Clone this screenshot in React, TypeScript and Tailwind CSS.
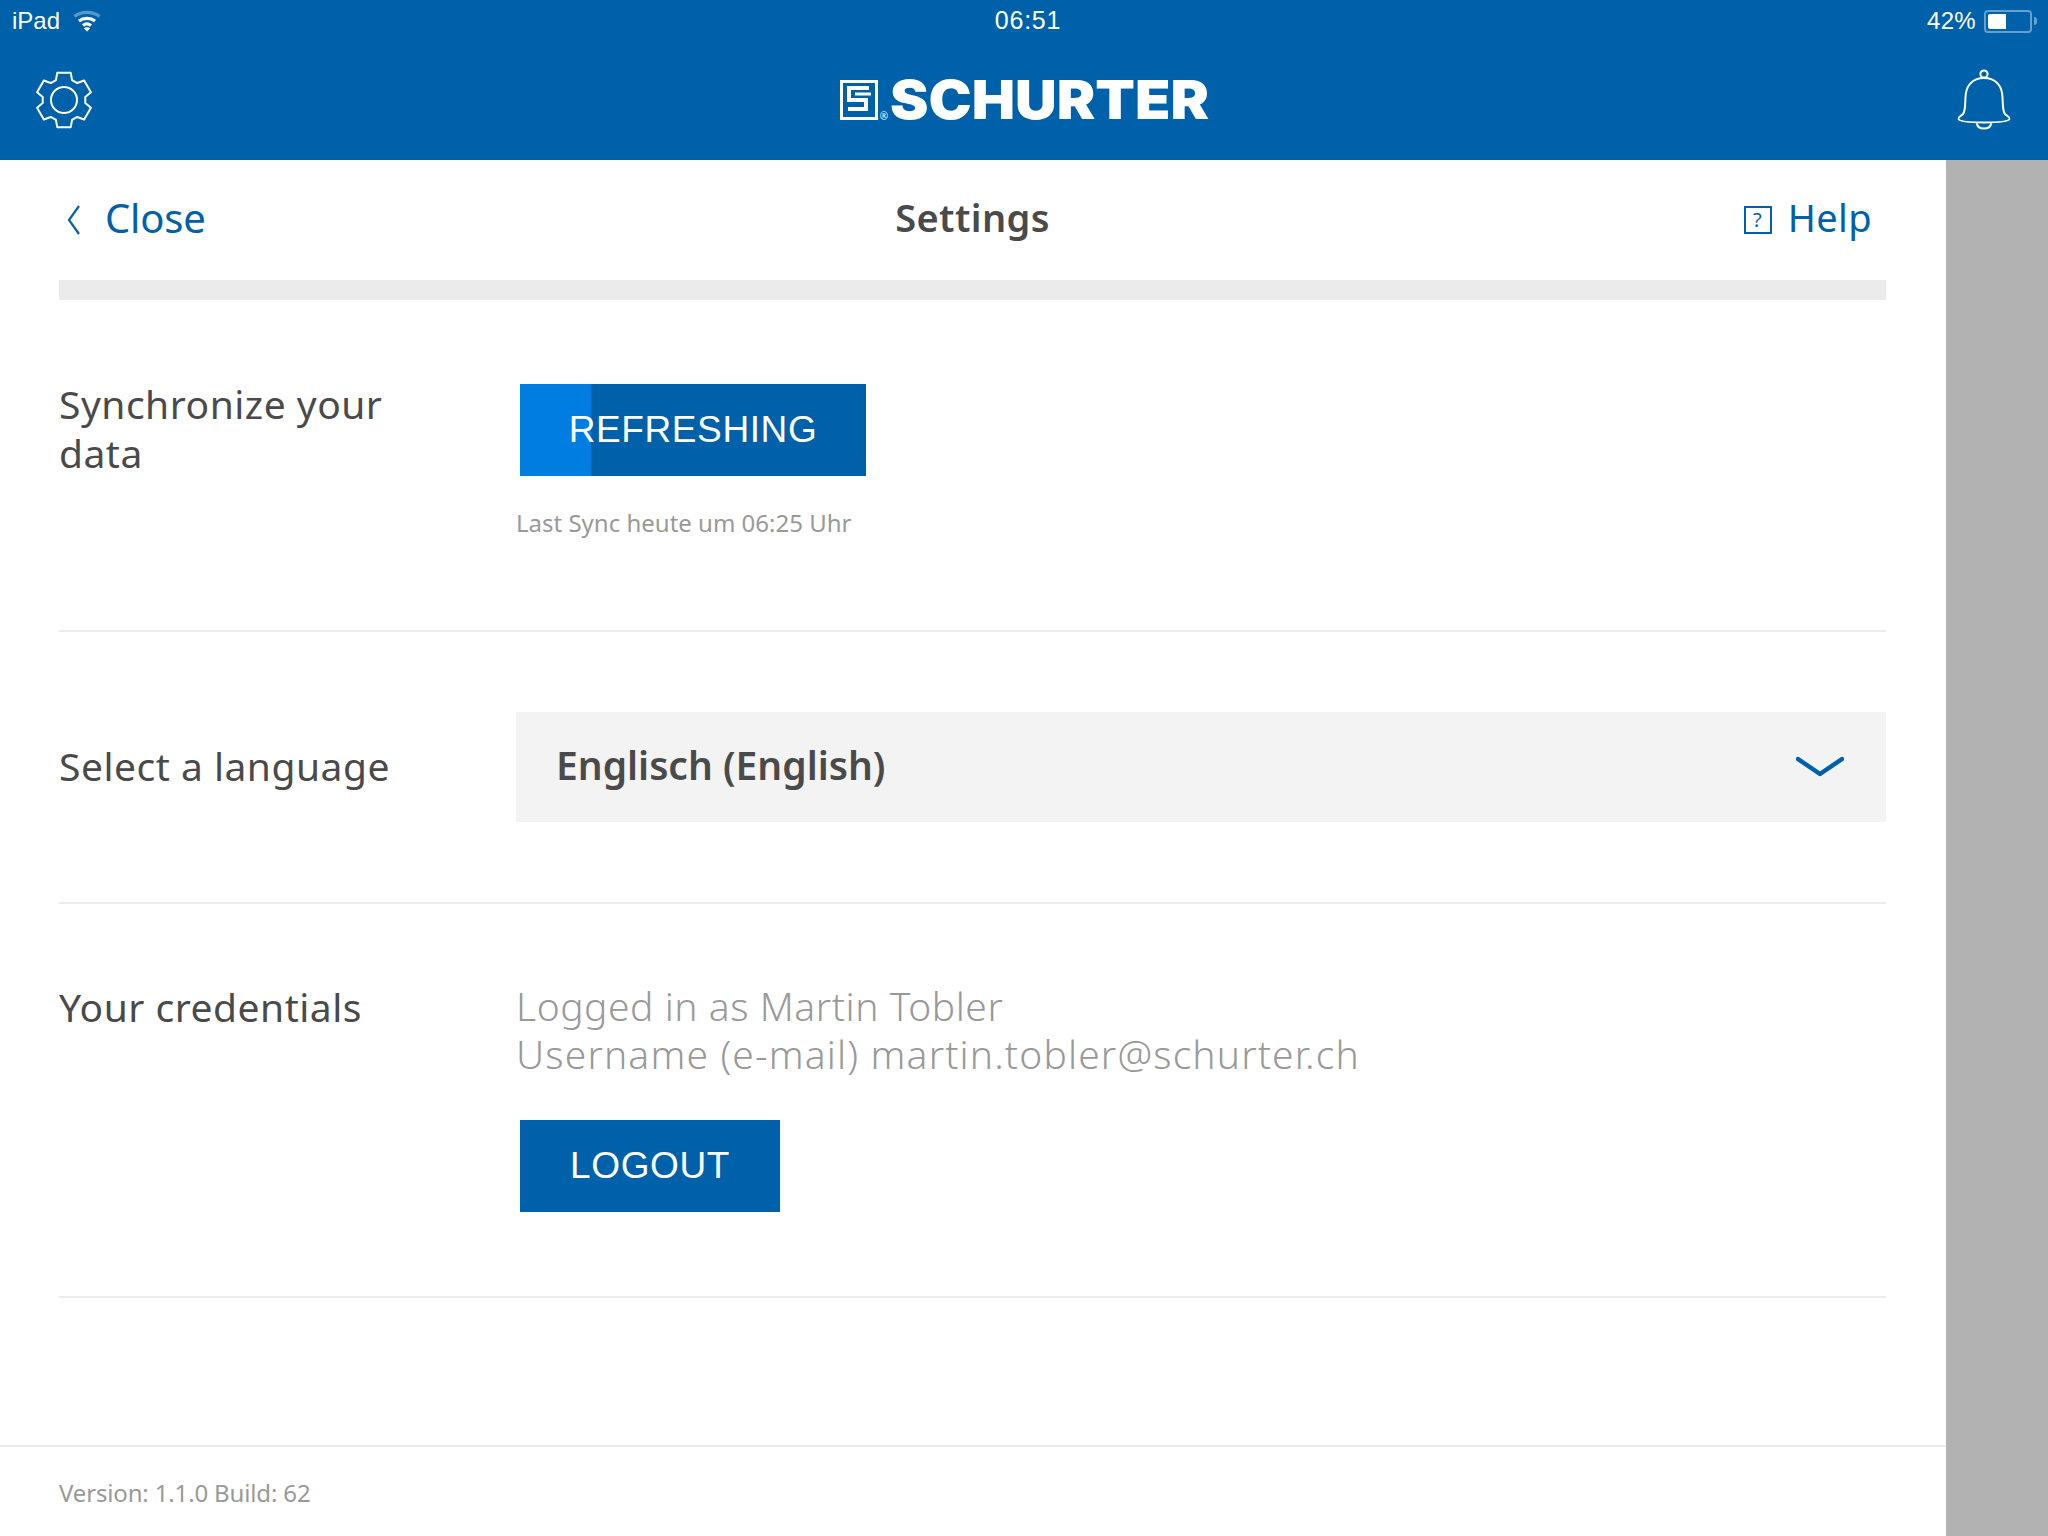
import React from "react"

const BLUE = "#0061ab"

// six-tooth gear outline, points worked out once when the module loads
const gearPath = (() => {
    const cx = 30, cy = 30
    const pts: string[] = []
    for (let i = 0; i < 6; i++) {
        const a = (i * 60 - 90) * Math.PI / 180
        const at = (r: number, d: number) => {
            const t = a + d * Math.PI / 180
            return `${(cx + r * Math.cos(t)).toFixed(2)} ${(cy + r * Math.sin(t)).toFixed(2)}`
        }
        pts.push(`${i === 0 ? "M" : "L"}${at(21.5, -22)}`)
        pts.push(`L${at(28, -14)}`)
        pts.push(`L${at(28, 14)}`)
        pts.push(`L${at(21.5, 22)}`)
    }
    return pts.join(" ") + " Z"
})()

const Gear = () => (
    <svg width="60" height="60" viewBox="0 0 60 60" fill="none" stroke="white" strokeWidth="2" strokeLinejoin="round">
        <path d={gearPath} />
        <circle cx="30" cy="30" r="13" />
    </svg>
)

const Bell = () => (
    <svg width="56" height="62" viewBox="0 0 56 62" fill="none" stroke="white" strokeWidth="2" strokeLinecap="round" strokeLinejoin="round">
        <circle cx="28" cy="5" r="3.6" />
        <path d="M28 9 C16 9 10 17 9.500 28 C9 37 9.500 42 7 45 C4.500 47.500 2 48 2.500 50 C3.500 52.500 15 53.500 28 53.500 C41 53.500 52.500 52.500 53.500 50 C54 48 51.500 47.500 49 45 C46.500 42 47 37 46.500 28 C46 17 40 9 28 9 Z" />
        <path d="M21 55 C22 61 34 61 35 55" />
    </svg>
)

const Wifi = () => (
    <svg width="28" height="22" viewBox="0 0 28 22" fill="none" strokeWidth="3.200">
        <path d="M1.500 6.500 C8 1 20 1 26.500 6.500" stroke="white" strokeOpacity="0.35" />
        <path d="M6 11 C10.500 7.500 17.500 7.500 22 11" stroke="white" />
        <path d="M10 15.500 C12.500 13.500 15.500 13.500 18 15.500" stroke="white" />
        <path d="M14 21.500 L10.800 18.200 C12.500 16.800 15.500 16.800 17.200 18.200 Z" fill="white" />
    </svg>
)

const Battery = () => (
    <div className="flex items-center">
        <div className="w-[48px] h-[23px] rounded-[4px] border-2 border-white/40 p-[2px] flex">
            <div className="w-[18px] bg-white rounded-l-[2px]" />
        </div>
        <div className="w-[3px] h-[8px] ml-[2px] bg-white/40 rounded-r-full" />
    </div>
)

const LogoMark = () => (
    <svg width="38" height="40" viewBox="0 0 38 40" fill="none" stroke="white">
        <rect x="1.500" y="1.500" width="35" height="37" strokeWidth="3" />
        <path d="M29 8 H9 V20 H26 V29 H8" strokeWidth="4" />
        <path d="M31 14 H15" strokeWidth="3" />
    </svg>
)

const PrimaryButton = ({ label, width, progress }: { label: string, width: string, progress?: boolean }) => (
    <div className={`relative h-[92px] ${width} ml-1 bg-[#0061ab] flex items-center justify-center`}>
        {progress && <div className="absolute left-0 top-0 bottom-0 w-[71px] bg-[#007de0]" />}
        <span className="relative text-white text-[37px] font-['Liberation_Sans',sans-serif] tracking-[0.6px]">{label}</span>
    </div>
)

const Row = ({ label, className, children }: { label: React.ReactNode, className: string, children: React.ReactNode }) => (
    <div className={`flex border-b-2 border-[#ebebeb] ${className}`}>
        <div className="w-[457px] shrink-0 text-[39px] leading-[49px] text-[#4a4a4a] tracking-[0.5px]">{label}</div>
        <div className="flex-1">{children}</div>
    </div>
)

export default function App() {
    return (
        <div className="w-[2048px] h-[1536px] flex flex-col overflow-hidden bg-white font-['Noto_Sans',sans-serif]">
            {/* blue header */}
            <header className="relative h-[160px] shrink-0 bg-[#0061ab] text-white">
                <div className="h-[42px] pl-3 pr-[11px] flex items-center justify-between font-['Liberation_Sans',sans-serif] text-[24px]">
                    <div className="flex items-center gap-[13px] w-[300px]">
                        <span>iPad</span>
                        <Wifi />
                    </div>
                    <span className="ml-[7px] text-[25px] tracking-[0.8px]">06:51</span>
                    <div className="flex items-center justify-end gap-[8px] w-[300px]">
                        <span className="tracking-[0.3px]">42%</span>
                        <Battery />
                    </div>
                </div>
                <div className="h-[118px] pl-[34px] pr-[36px] flex items-start justify-between">
                    <div className="mt-[28px]"><Gear /></div>
                    <div className="mt-[38px] -ml-[4px] flex items-start">
                        <LogoMark />
                        <span className="text-[10px] leading-none mt-[31px] ml-[2px] mr-[2px]">®</span>
                        <span className="block w-[316px] origin-left scale-x-[1.07] text-[54px] leading-[40px] font-black font-['Inter',sans-serif]">SCHURTER</span>
                    </div>
                    <div className="mt-[27px]"><Bell /></div>
                </div>
            </header>

            <div className="flex-1 flex">
                <main className="w-[1946px] flex flex-col">
                    <div className="flex-1 pl-[59px] pr-[60px]">
                        {/* top bar */}
                        <div className="h-[140px] pb-[5px] flex items-center justify-between border-b-[20px] border-[#ebebeb]">
                            <div className="flex items-center w-[400px] text-[40px] text-[#0061ab] tracking-[-0.2px]">
                                <svg className="ml-[8px] mr-[24px] mt-[5px]" width="14" height="30" viewBox="0 0 14 30" fill="none" stroke={BLUE} strokeWidth="2.200">
                                    <path d="M12 1 L2 15 L12 29" />
                                </svg>
                                Close
                            </div>
                            <div className="text-[38px] font-semibold text-[#4a4a4a] tracking-[0.4px]">Settings</div>
                            <div className="flex items-center justify-end w-[400px] pr-[14px] text-[38px] text-[#0061ab] tracking-[0.4px]">
                                <span className="w-[28px] h-[28px] mr-[16px] mt-[5px] border-2 border-[#0061ab] flex items-center justify-center text-[20px] leading-none">?</span>
                                Help
                            </div>
                        </div>

                        <Row label={<div className="-mt-[5px]">Synchronize your<br />data</div>} className="h-[332px] pt-[84px]">
                            <PrimaryButton label="REFRESHING" width="w-[346px]" progress />
                            <div className="mt-[31px] text-[24px] leading-[32px] text-[#999999]">Last Sync heute um 06:25 Uhr</div>
                        </Row>

                        <Row label={<div className="-mt-[4px]">Select a language</div>} className="h-[272px] items-center">
                            <div className="h-[110px] bg-[#f3f3f3] pl-[40px] pr-[42px] flex items-center justify-between">
                                <span className="-mt-[3px] text-[39px] font-semibold text-[#4a4a4a]">Englisch (English)</span>
                                <svg width="48" height="22" viewBox="0 0 48 22" fill="none" stroke={BLUE} strokeWidth="4.500" strokeLinecap="round" strokeLinejoin="round">
                                    <path d="M2 3 L24 18 L46 3" />
                                </svg>
                            </div>
                        </Row>

                        <Row label={<div className="-mt-[2px]">Your credentials</div>} className="h-[394px] pt-[80px]">
                            <div className="-mt-[2px]">
                                <div className="text-[39px] leading-[48px] text-[#999999] font-light">
                                    <span className="block tracking-[0.55px]">Logged in as Martin Tobler</span>
                                    <span className="block tracking-[1.15px]">Username (e-mail) martin.tobler@schurter.ch</span>
                                </div>
                                <div className="mt-[42px]">
                                    <PrimaryButton label="LOGOUT" width="w-[260px]" />
                                </div>
                            </div>
                        </Row>
                    </div>

                    {/* footer */}
                    <div className="h-[91px] border-t-2 border-[#ebebeb] px-[59px] pt-[30px] text-[24px] leading-[32px] text-[#999999] tracking-[-0.15px]">
                        Version: 1.1.0 Build: 62
                    </div>
                </main>
                <aside className="flex-1 bg-[#b2b2b2]" />
            </div>
        </div>
    )
}
